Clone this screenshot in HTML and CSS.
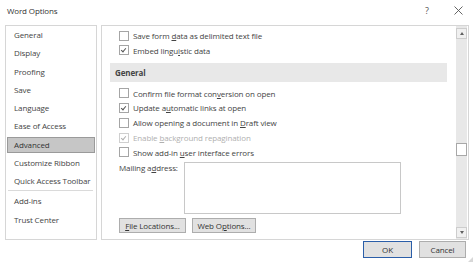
FILE: index.html
```html
<!DOCTYPE html>
<html lang="en">
<head>
  <meta charset="UTF-8" />
  <title>Word Options</title>
  <link rel="stylesheet" href="styles.css">
</head>
<body>
  <div class="dialog">
    <div class="titlebar">
      <span class="title">Word Options</span>
      <span class="title-btn help">?</span>
      <span class="title-btn close">
        <svg width="9" height="9" viewBox="0 0 9 9"><path d="M0.5 0.5 L8.5 8.5 M8.5 0.5 L0.5 8.5" stroke="#555" stroke-width="0.9" fill="none"/></svg>
      </span>
    </div>

    <div class="main">
      <ul class="nav">
        <li>General</li>
        <li>Display</li>
        <li>Proofing</li>
        <li>Save</li>
        <li>Language</li>
        <li>Ease of Access</li>
        <li class="active">Advanced</li>
        <li>Customize Ribbon</li>
        <li>Quick Access Toolbar</li>
        <li class="sep"></li>
        <li>Add-ins</li>
        <li>Trust Center</li>
      </ul>

      <div class="panel">
        <div class="content">
          <label class="opt"><span class="box"></span><span>Save form <u>d</u>ata as delimited text file</span></label>
          <label class="opt"><span class="box checked"></span><span>Embed lingu<u>i</u>stic data</span></label>

          <div class="section">General</div>

          <label class="opt"><span class="box"></span><span>Confirm file format con<u>v</u>ersion on open</span></label>
          <label class="opt"><span class="box checked"></span><span>Update a<u>u</u>tomatic links at open</span></label>
          <label class="opt"><span class="box"></span><span>Allow opening a document in <u>D</u>raft view</span></label>
          <label class="opt disabled"><span class="box checked"></span><span>Enable <u>b</u>ackground repagination</span></label>
          <label class="opt"><span class="box"></span><span>Show add-in <u>u</u>ser interface errors</span></label>

          <div class="mail">
            <span class="mail-label">Mailing a<u>d</u>dress:</span>
            <div class="textbox"></div>
          </div>

          <div class="btn-row">
            <button class="btn file-btn"><u>F</u>ile Locations...</button>
            <button class="btn web-btn">Web O<u>p</u>tions...</button>
          </div>
        </div>

        <div class="scrollbar">
          <div class="arrow up"></div>
          <div class="track"><div class="thumb"></div></div>
          <div class="arrow down"></div>
        </div>
      </div>
    </div>

    <div class="footer">
      <button class="btn ok">OK</button>
      <button class="btn cancel">Cancel</button>
    </div>
    <div class="grip"></div>
  </div>
</body>
</html>
```

FILE: styles.css
```css
body {
  margin: 0;
  background: #fff;
  font-family: "Open Sans", "Noto Sans", sans-serif;
  font-size: 8px;
  letter-spacing: -0.12px;
  color: #444;
}
.dialog {
  width: 474px;
  height: 263px;
  position: relative;
  overflow: hidden;
}

/* title bar */
.titlebar {
  height: 21px;
  display: flex;
  align-items: center;
  padding: 0 0 0 7px;
}
.title {
  flex: 1;
  font-size: 8px;
  color: #333;
}
.title-btn {
  display: flex;
  align-items: center;
  justify-content: center;
  width: 20px;
  color: #555;
}
.help { margin-right: 11px; font-size: 9px; }
.close { margin-right: 6px; }

/* body */
.main {
  display: flex;
  gap: 4px;
  margin: 4px 0 0 5px;
  height: 215px;
}
.nav {
  list-style: none;
  margin: 0;
  padding: 0;
  border: 1px solid #d6d6d6;
  box-sizing: border-box;
  width: 92px;
  display: flex;
  flex-direction: column;
}
.nav li {
  height: 16.25px;
  line-height: 16px;
  margin: 1px 1px;
  padding-left: 7px;
  flex: none;
}
.nav li.active {
  background: #c6c6c6;
  outline: 1px solid #9a9a9a;
  outline-offset: -1px;
  color: #333;
}
.nav li.sep {
  height: 0;
  margin: 0 3px 1px 2px;
  border-top: 1px solid #dadada;
  padding: 0;
}

.panel {
  width: 368px;
  border: 1px solid #d6d6d6;
  box-sizing: border-box;
  display: flex;
}
.content {
  flex: 1;
  padding: 2px 0 0 8px;
}
.opt {
  display: flex;
  align-items: center;
  height: 14.8px;
  padding-left: 9px;
}
.opt:first-child { height: 15px; }
.opt u, .mail u, .btn u { text-decoration: underline; text-underline-offset: 1px; }
.box {
  width: 8px;
  height: 8px;
  border: 1px solid #a5a5a5;
  background: #fff;
  margin-right: 4px;
  flex: none;
  position: relative;
}
.box.checked::after {
  content: "";
  position: absolute;
  left: 2px;
  top: 1px;
  width: 2px;
  height: 4px;
  border: solid #555;
  border-width: 0 1px 1px 0;
  transform: rotate(40deg);
}
.opt.disabled { color: #b0b0b0; }
.opt.disabled .box { border-color: #cfcfcf; }
.opt.disabled .box.checked::after { border-color: #b0b0b0; }

.section {
  margin: 5px 9px 4px 0;
  height: 19px;
  line-height: 19px;
  background: #e8e8e8;
  padding-left: 5px;
  font-weight: bold;
  color: #444;
}

.mail {
  display: flex;
  margin-top: 2px;
  padding-left: 9px;
}
.mail-label {
  width: 65px;
  line-height: 10px;
  padding-top: 1px;
}
.textbox {
  width: 215px;
  height: 50px;
  border: 1px solid #c8c8c8;
}

.btn-row {
  display: flex;
  gap: 6px;
  margin: 4px 0 0 9px;
}
.btn {
  font-family: inherit;
  font-size: 8px;
  letter-spacing: -0.12px;
  color: #333;
  background: #e1e1e1;
  border: 1px solid #adadad;
  padding: 0;
  height: 15px;
  box-sizing: border-box;
}
.file-btn { width: 67px; }
.web-btn { width: 64px; }

/* scrollbar */
.scrollbar {
  width: 11px;
  margin-right: 1px;
  display: flex;
  flex-direction: column;
  background: #e8e8e8;
}
.arrow {
  height: 11px;
  display: flex;
  align-items: center;
  justify-content: center;
  background: #f0f0f0;
  border: 1px solid #cdcdcd;
  box-sizing: border-box;
}
.arrow::before {
  content: "";
  border-left: 2.5px solid transparent;
  border-right: 2.5px solid transparent;
}
.arrow.up { margin-top: 2px; }
.arrow.up::before { border-bottom: 3px solid #606060; }
.arrow.down { margin-bottom: 1px; }
.arrow.down::before { border-top: 3px solid #606060; }
.track {
  flex: 1;
  padding-top: 104px;
}
.thumb {
  height: 13px;
  background: #fff;
  border: 1px solid #a8a8a8;
  box-sizing: border-box;
}

/* footer */
.footer {
  display: flex;
  justify-content: flex-end;
  gap: 7px;
  padding: 1px 8px 0 0;
}
.footer .btn { height: 17px; }
.ok {
  width: 49px;
  border: 1px solid #2b5ea8;
}
.cancel { width: 47px; }

.grip {
  position: absolute;
  right: 1px;
  bottom: 1px;
  width: 5px;
  height: 5px;
  background: radial-gradient(circle, #aaa 0.6px, transparent 0.8px) 0 0 / 2px 2px;
  clip-path: polygon(100% 0, 100% 100%, 0 100%);
}
```
